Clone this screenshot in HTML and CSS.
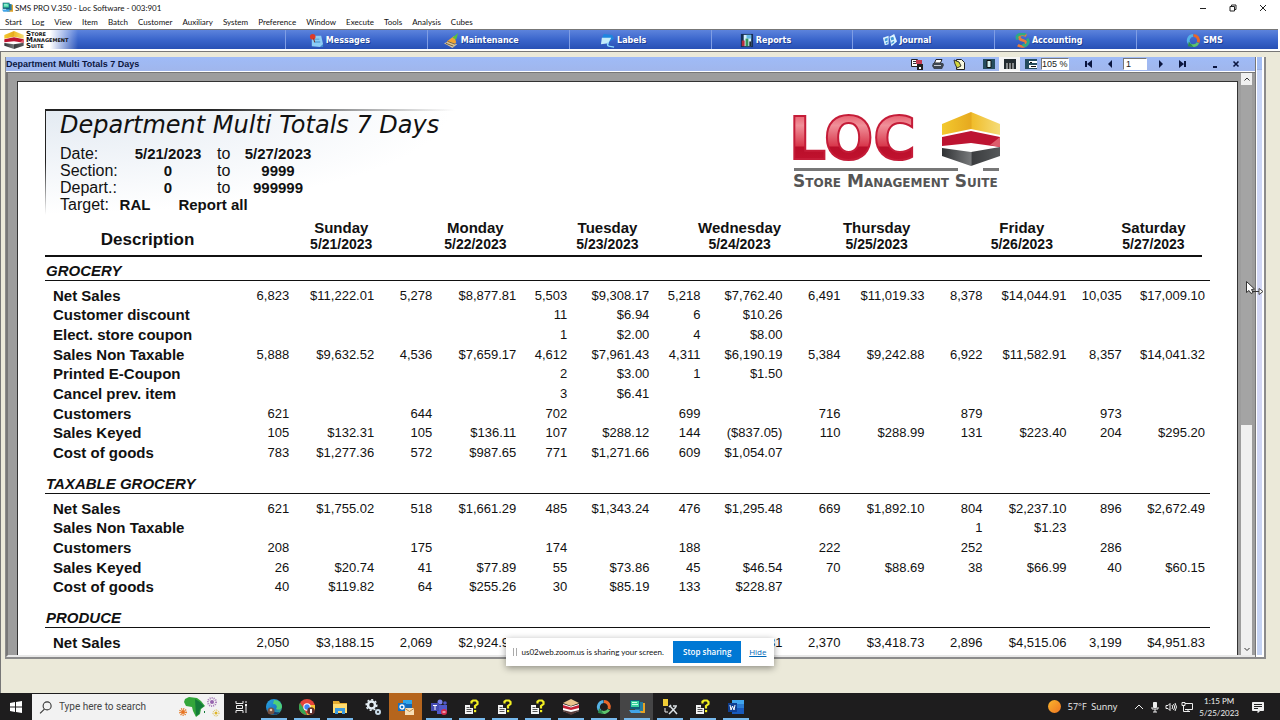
FILE: index.html
```html
<!DOCTYPE html>
<html lang="en">
<head>
<meta charset="utf-8">
<title>SMS PRO V.350 - Loc Software - 003:901</title>
<link rel="stylesheet" href="styles.css">
</head>
<body>
<svg class="defs" width="0" height="0" aria-hidden="true">
  <defs>
    <linearGradient id="red" x1="0" y1="0" x2="0" y2="1"><stop offset="0" stop-color="#e0364c"/><stop offset=".3" stop-color="#f09099"/><stop offset=".6" stop-color="#d8384c"/><stop offset=".62" stop-color="#b90f2a"/><stop offset="1" stop-color="#c81433"/></linearGradient>
    <linearGradient id="gold" x1="0" x2="1"><stop offset="0" stop-color="#f3c92e"/><stop offset=".5" stop-color="#e6a91f"/><stop offset=".52" stop-color="#f0bd2b"/><stop offset="1" stop-color="#f5dc78"/></linearGradient>
    <linearGradient id="steel" x1="0" x2="1"><stop offset="0" stop-color="#303234"/><stop offset=".5" stop-color="#77797b"/><stop offset=".52" stop-color="#3b3d3f"/><stop offset="1" stop-color="#55585a"/></linearGradient>
    <linearGradient id="edge" x1="0" y1="0" x2="1" y2="1"><stop offset="0" stop-color="#2aa7e0"/><stop offset=".6" stop-color="#1a79c9"/><stop offset="1" stop-color="#47c56c"/></linearGradient>
    <symbol id="cube" viewBox="0 0 58 54">
      <path fill="url(#gold)" d="M0 12 29 0 58 12V23L29 17 0 23z"/>
      <path fill="#bd1431" d="M0 25 29 19 58 25V35L29 31 0 34z"/>
      <path fill="#dd5d6c" d="M48 33l10-8v10z"/>
      <path fill="url(#steel)" d="M0 36 29 40 58 35V44L29 54 0 44z"/>
    </symbol>
    <symbol id="ask" viewBox="0 0 16 16">
      <path fill="#f4f4f4" d="M1 6h5v3h3v6H1z"/><path stroke="#555" d="M2.500 8.500h3M2.500 10.500h5M2.500 12.500h5"/>
      <path fill="none" stroke="#f2ef22" stroke-width="2.200" d="M7.500 4.500V2.500l1.500-1h3l1.500 1.500v2L11 7V9.500"/><path fill="#f2ef22" d="M10 11h2.200v2.200H10z"/>
    </symbol>
    <symbol id="ring" viewBox="0 0 16 16">
      <g fill="none" stroke-width="3"><path stroke="#e8672a" d="M8 2.500A5.500 5.500 0 0 1 13 10"/><path stroke="#5fc26d" d="M12.800 10.600A5.500 5.500 0 0 1 5 12.600"/><path stroke="#55b2e6" d="M4.500 12.300A5.500 5.500 0 0 1 7.500 2.500"/></g>
      <path fill="#2d8b4e" d="M3 9l5 6-6-1z"/>
    </symbol>
    <symbol id="screens" viewBox="0 0 16 16">
      <path fill="#e6a324" d="M9 4h7v10H7z"/><path fill="#247ba0" d="M6 3h8v9H6z"/><path fill="#125c79" d="M1 1h10v9H1z"/><path fill="#39cf9d" d="M2 2h8v6H2z"/><path stroke="#caffea" d="M3 3.500h5M3 5.500h6"/><path fill="#42a5e8" d="M0 11h10l2 3H2z"/>
    </symbol>
  </defs>
</svg>

<header class="titlebar">
  <svg class="app-icon"><use href="#screens"/></svg>
  <h1>SMS PRO V.350 - Loc Software - 003:901</h1>
  <div class="caption-buttons">
    <button aria-label="Minimize"><svg viewBox="0 0 8 8"><path d="M1 4.500h6"/></svg></button>
    <button aria-label="Restore"><svg viewBox="0 0 8 8"><path d="M1 2.500h4.500V7H1zM2.500 2.500V1H7v4.500H5.500"/></svg></button>
    <button aria-label="Close"><svg viewBox="0 0 8 8"><path d="M1 1l6 6M7 1L1 7"/></svg></button>
  </div>
</header>

<nav class="menubar">
  <button>Start</button><button>Log</button><button>View</button><button>Item</button><button>Batch</button><button>Customer</button><button>Auxiliary</button><button>System</button><button>Preference</button><button>Window</button><button>Execute</button><button>Tools</button><button>Analysis</button><button>Cubes</button>
</nav>

<nav class="modules">
  <div class="brand"><svg class="brand-cube"><use href="#cube"/></svg><span>Store<br>Management<br>Suite</span></div>
  <button><svg viewBox="0 0 16 16"><path fill="#8ccdf5" d="M3 3h10l2 9-3 3-9-1z"/><path fill="#3f8ed0" d="M6 6h5v1H6zM6 9h6v1H6zM12 15l3-3v3z"/><circle cx="4" cy="4" r="3" fill="#dc3b2b"/><path stroke="#721" d="M5 6l1 4"/></svg>Messages</button>
  <button><svg viewBox="0 0 16 16"><path fill="#f1a530" d="M3 9l8-6 2 7-6 4z"/><path fill="#56c33f" d="M9 5l6-5-2 7z"/><path fill="#d9c7a0" d="M0 11l5-2 9 3-5 4z"/><path fill="none" stroke="#755d35" d="M2 11l8 3M4 9l8 3"/></svg>Maintenance</button>
  <button><svg viewBox="0 0 16 16"><path fill="#1e86df" d="M4 1l9 1 2 4-5 3-8-3z"/><path fill="#c4ecfa" d="M2 5h10l-3 6-8 1z"/><path fill="none" stroke="#8edcff" stroke-width="1.500" d="M9 10c-3 5 2 4 6 5"/></svg>Labels</button>
  <button><svg viewBox="0 0 16 16"><path fill="#152f56" d="M2 1h13v14H2z"/><path fill="#d5effb" d="M5 2h8v12H5z"/><path fill="#65b9e6" d="M8 2h5v4H8z"/><path fill="#b62f3e" d="M3 8h3v6H3z"/><path fill="#38965a" d="M7 6h3v8H7z"/><path fill="#222d36" d="M11 9h2v5h-2z"/></svg>Reports</button>
  <button><svg viewBox="0 0 16 16"><path fill="#dff6ff" d="M1 5l6-2v9l-4 1zM8 4l5-3 3 8-6 5z"/><path fill="#4298d6" d="M3 6l3-1v3l-3 1zM9 5l3-1 1 3-3 1zM4 10l2-1v2l-2 1zM10 10l3-2v2l-3 2z"/></svg>Journal</button>
  <button><svg viewBox="0 0 16 16"><g fill="none" stroke-width="3"><path stroke="#eb7b38" d="M12 3C7 0 3 3 5 6s7 1 7 5-6 4-9 2"/><path stroke="#2daa86" d="M3 7c-4-6 6-7 8-5M8 12c4 4 8-2 5-6"/></g></svg>Accounting</button>
  <button><svg><use href="#ring"/></svg>SMS</button>
</nav>

<main class="client">
  <section class="child">
    <div class="doc">
      <div class="docbar">
        <h2>Department Multi Totals 7 Days</h2>
        <div class="tools">
          <button aria-label="Export"><svg viewBox="0 0 12 12"><path fill="#fff" stroke="#222" d="M.500 1.500h6v7h-6z"/><path stroke="#333" d="M2 3.500h3M2 5.500h3"/><path fill="#c43a50" d="M5 2h6v4H5z"/><path fill="#222" d="M6 6h6v6H6z"/><path fill="#fff" d="M8 9h2v2H8z"/></svg></button>
          <button aria-label="Print"><svg viewBox="0 0 12 12"><path fill="#fff" stroke="#222" d="M4 1.500h6L8.500 5H2.500z"/><path fill="#3d4652" d="M1 5h10l1 2-2 4H2L0 8z"/><path stroke="#c8ccd2" d="M2 7.500h7"/></svg></button>
          <button aria-label="Page setup"><svg viewBox="0 0 12 12"><path fill="#f7f7df" stroke="#222" d="M3.500 1.500h5l3 3v7h-8z"/><path fill="#d3d63d" stroke="#333" d="M1 2l5 2 2 4-4 2-2-4z"/></svg></button>
          <button class="set" aria-label="Whole page"><svg viewBox="0 0 12 12"><path fill="#254c5e" d="M0 1h12v10H0z"/><path fill="#d5f2ef" stroke="#111" d="M4 2.500h4v7H4z"/></svg></button>
          <button class="pressed" aria-label="Page width"><svg viewBox="0 0 12 12"><path fill="#222a30" d="M0 1h12v10H0z"/><path fill="#85898c" d="M2 5h8v6H2z"/><path stroke="#222" d="M4.500 5v6M7.500 5v6"/></svg></button>
          <button aria-label="Actual size"><svg viewBox="0 0 12 12"><path fill="#254c5e" d="M0 1h12v10H0z"/><path fill="#fff" d="M4 3h8v2H4zM4 7h8v3H4z"/><path stroke="#111" d="M6 8.500h5M5 4.500h2"/></svg></button>
          <input class="zoom" aria-label="Zoom" value="105 %">
          <button class="set" aria-label="First page"><svg viewBox="0 0 12 12"><path d="M2 3h2v6H2zM9 2v8L4 6z"/></svg></button>
          <button aria-label="Previous page"><svg viewBox="0 0 12 12"><path d="M8 2v8L4 6z"/></svg></button>
          <input class="pageno" aria-label="Page" value="1">
          <button aria-label="Next page"><svg viewBox="0 0 12 12"><path d="M4 2v8l4-4z"/></svg></button>
          <button aria-label="Last page"><svg viewBox="0 0 12 12"><path d="M3 2v8l5-4zM8 3h2v6H8z"/></svg></button>
          <button class="set2" aria-label="Minimize report"><svg viewBox="0 0 12 12"><path d="M4 8h4v2H4z"/></svg></button>
          <button aria-label="Close report"><svg viewBox="0 0 12 12"><path fill="none" stroke="#0b163f" stroke-width="1.600" d="M3.500 3.500l5 5M8.500 3.500l-5 5"/></svg></button>
        </div>
      </div>
      <div class="viewer">
        <article class="page">
          <header class="report-head">
            <div class="info">
              <h3>Department Multi Totals 7 Days</h3>
              <dl>
                <dt>Date:</dt><dd><b>5/21/2023</b><span>to</span><b>5/27/2023</b></dd>
                <dt>Section:</dt><dd><b>0</b><span>to</span><b>9999</b></dd>
                <dt>Depart.:</dt><dd><b>0</b><span>to</span><b>999999</b></dd>
                <dt>Target:</dt><dd class="target"><b>RAL</b><b>Report all</b></dd>
              </dl>
            </div>
            <svg class="loc" viewBox="0 0 208 78" role="img" aria-label="LOC Store Management Suite">
              <text class="loc-name" x="-4" y="47">LOC</text>
              <use href="#cube" x="149" y="0" width="58" height="54"/>
              <path fill="#777" d="M1 56h164v3H1zM190 56h16v3h-16z"/>
              <text class="loc-sub" x="0" y="75">Store Management Suite</text>
            </svg>
          </header>

          <table class="days">
            <colgroup><col class="d0"><col class="d1"><col class="d1"><col class="d2"><col class="d1"><col class="d4"><col class="d5"><col class="d6"></colgroup>
            <tr><th class="desc">Description</th><th>Sunday<small>5/21/2023</small></th><th>Monday<small>5/22/2023</small></th><th>Tuesday<small>5/23/2023</small></th><th>Wednesday<small>5/24/2023</small></th><th>Thursday<small>5/25/2023</small></th><th>Friday<small>5/26/2023</small></th><th>Saturday<small>5/27/2023</small></th></tr>
          </table>

          <table class="figures">
            <colgroup><col class="c-desc"><col class="c-first"><col class="c85"><col class="c58"><col class="c84"><col class="c51"><col class="c82"><col class="c51"><col class="c82"><col class="c58"><col class="c84"><col class="c58"><col class="c84"><col class="c55"><col class="c-last"></colgroup>
            <tbody>
              <tr class="dept"><th colspan="15">GROCERY</th></tr>
              <tr><th>Net Sales</th><td>6,823</td><td>$11,222.01</td><td>5,278</td><td>$8,877.81</td><td>5,503</td><td>$9,308.17</td><td>5,218</td><td>$7,762.40</td><td>6,491</td><td>$11,019.33</td><td>8,378</td><td>$14,044.91</td><td>10,035</td><td>$17,009.10</td></tr>
              <tr><th>Customer discount</th><td></td><td></td><td></td><td></td><td>11</td><td>$6.94</td><td>6</td><td>$10.26</td><td></td><td></td><td></td><td></td><td></td><td></td></tr>
              <tr><th>Elect. store coupon</th><td></td><td></td><td></td><td></td><td>1</td><td>$2.00</td><td>4</td><td>$8.00</td><td></td><td></td><td></td><td></td><td></td><td></td></tr>
              <tr><th>Sales Non Taxable</th><td>5,888</td><td>$9,632.52</td><td>4,536</td><td>$7,659.17</td><td>4,612</td><td>$7,961.43</td><td>4,311</td><td>$6,190.19</td><td>5,384</td><td>$9,242.88</td><td>6,922</td><td>$11,582.91</td><td>8,357</td><td>$14,041.32</td></tr>
              <tr><th>Printed E-Coupon</th><td></td><td></td><td></td><td></td><td>2</td><td>$3.00</td><td>1</td><td>$1.50</td><td></td><td></td><td></td><td></td><td></td><td></td></tr>
              <tr><th>Cancel prev. item</th><td></td><td></td><td></td><td></td><td>3</td><td>$6.41</td><td></td><td></td><td></td><td></td><td></td><td></td><td></td><td></td></tr>
              <tr><th>Customers</th><td>621</td><td></td><td>644</td><td></td><td>702</td><td></td><td>699</td><td></td><td>716</td><td></td><td>879</td><td></td><td>973</td><td></td></tr>
              <tr><th>Sales Keyed</th><td>105</td><td>$132.31</td><td>105</td><td>$136.11</td><td>107</td><td>$288.12</td><td>144</td><td>($837.05)</td><td>110</td><td>$288.99</td><td>131</td><td>$223.40</td><td>204</td><td>$295.20</td></tr>
              <tr><th>Cost of goods</th><td>783</td><td>$1,277.36</td><td>572</td><td>$987.65</td><td>771</td><td>$1,271.66</td><td>609</td><td>$1,054.07</td><td></td><td></td><td></td><td></td><td></td><td></td></tr>
            </tbody>
            <tbody>
              <tr class="dept"><th colspan="15">TAXABLE GROCERY</th></tr>
              <tr><th>Net Sales</th><td>621</td><td>$1,755.02</td><td>518</td><td>$1,661.29</td><td>485</td><td>$1,343.24</td><td>476</td><td>$1,295.48</td><td>669</td><td>$1,892.10</td><td>804</td><td>$2,237.10</td><td>896</td><td>$2,672.49</td></tr>
              <tr><th>Sales Non Taxable</th><td></td><td></td><td></td><td></td><td></td><td></td><td></td><td></td><td></td><td></td><td>1</td><td>$1.23</td><td></td><td></td></tr>
              <tr><th>Customers</th><td>208</td><td></td><td>175</td><td></td><td>174</td><td></td><td>188</td><td></td><td>222</td><td></td><td>252</td><td></td><td>286</td><td></td></tr>
              <tr><th>Sales Keyed</th><td>26</td><td>$20.74</td><td>41</td><td>$77.89</td><td>55</td><td>$73.86</td><td>45</td><td>$46.54</td><td>70</td><td>$88.69</td><td>38</td><td>$66.99</td><td>40</td><td>$60.15</td></tr>
              <tr><th>Cost of goods</th><td>40</td><td>$119.82</td><td>64</td><td>$255.26</td><td>30</td><td>$85.19</td><td>133</td><td>$228.87</td><td></td><td></td><td></td><td></td><td></td><td></td></tr>
            </tbody>
            <tbody>
              <tr class="dept"><th colspan="15">PRODUCE</th></tr>
              <tr><th>Net Sales</th><td>2,050</td><td>$3,188.15</td><td>2,069</td><td>$2,924.90</td><td></td><td></td><td></td><td>$2,951.31</td><td>2,370</td><td>$3,418.73</td><td>2,896</td><td>$4,515.06</td><td>3,199</td><td>$4,951.83</td></tr>
            </tbody>
          </table>
        </article>
        <div class="scroll">
          <button aria-label="Scroll up"><svg viewBox="0 0 8 8"><path d="M1.500 5.500L4 3l2.500 2.500"/></svg></button>
          <div class="track"><div class="thumb"></div></div>
          <button aria-label="Scroll down"><svg viewBox="0 0 8 8"><path d="M1.500 3L4 5.500 6.500 3"/></svg></button>
        </div>
      </div>
    </div>
    <div class="side"></div>
  </section>

  <svg class="cursor" viewBox="0 0 18 16"><path fill="none" stroke="#333" d="M5 10.500h8"/><path fill="#fff" stroke="#444" d="M13 7.500l4 3-4 3z"/><path fill="#fff" stroke="#333" d="M.500.500v11l2.500-2 2 3 2-1-1.500-3 3-.500z"/></svg>

  <aside class="share">
    <span class="grip"></span>
    <p>us02web.zoom.us is sharing your screen.</p>
    <button>Stop sharing</button>
    <a href="#">Hide</a>
  </aside>
</main>

<footer class="taskbar">
  <button class="start" aria-label="Start"><svg viewBox="0 0 12 12"><path fill="#fff" d="M0 2l5-1v4.500H0zM6 1l6-1v5.500H6zM0 6.500h5V11l-5-1zM6 6.500h6V12l-6-1z"/></svg></button>
  <label class="search">
    <svg class="lens" viewBox="0 0 12 12"><circle cx="7.500" cy="4.500" r="3.700"/><path d="M5 7.500L1 11.500"/></svg>
    <input placeholder="Type here to search" aria-label="Search">
    <svg class="art" viewBox="0 0 42 22"><path fill="#33a63a" d="M7 3l4-2 8 1 4 3 4 5-4 3-1 5-4 3-3-6-1-4-6-1-2-4z"/><path fill="#147b39" d="M17 3l5 3 4 4-4 3-1 5-3 2z"/><g fill="none" stroke-dasharray="1 1"><circle cx="5" cy="16" r="3" stroke="#e57b28" stroke-width="2"/><circle cx="34" cy="6" r="4" stroke="#a77bb8" stroke-width="2"/><circle cx="38" cy="17" r="3" stroke="#d9b32d"/></g><circle cx="5" cy="16" r="2" fill="#e87320"/><circle cx="34" cy="6" r="2" fill="#9764ae"/><circle cx="38" cy="17" r="1.500" fill="#dfb525"/><path fill="#147b39" d="M26 15h1v2h-1z"/></svg>
  </label>
  <div class="apps">
    <button aria-label="Task view"><svg viewBox="0 0 16 16"><path fill="none" stroke="#eee" d="M3 2v2.500h7V2M3 14v-2.500h7V14M3.500 6.500h6v3h-6zM13 2v2M13 7v7"/><path fill="#eee" d="M12 5h2v2h-2z"/></svg></button>
    <button class="open" aria-label="Edge"><svg viewBox="0 0 16 16"><circle cx="8" cy="8" r="8" fill="url(#edge)"/><path fill="#4fcf79" d="M8 1c5 0 8 3 8 7-1 3-4 3-6 2 2-3 0-5-3-5z"/><path fill="#153b73" d="M6 8c-1 4 3 6 8 5-3 4-8 3-10 0z"/><circle cx="5" cy="12" r="3.500" fill="#765142"/><circle cx="5" cy="11" r="1.300" fill="#edc8aa"/></svg></button>
    <button class="open" aria-label="Chrome"><svg viewBox="0 0 16 16"><circle cx="8" cy="8" r="8" fill="#e6453a"/><path fill="#36a852" d="M1 4l4 6 3 6C1 15-2 9 1 4z"/><path fill="#f7c535" d="M11 6h5c1 6-3 10-8 10z"/><circle cx="8" cy="8" r="3.700" fill="#fff"/><circle cx="8" cy="8" r="2.700" fill="#4285f4"/><circle cx="12" cy="12" r="3.800" fill="#61302d"/><path fill="#fff" d="M11 10h2v4h-2z"/></svg></button>
    <button class="open" aria-label="File Explorer"><svg viewBox="0 0 16 16"><path fill="#e5ac31" d="M1 2h6l1 2h7v10H1z"/><path fill="#ffdc70" d="M1 5h14v9H1z"/><path fill="#3d9be0" d="M3 9h10v6h-3v-3H6v3H3z"/></svg></button>
    <button aria-label="Services"><svg viewBox="0 0 16 16"><circle cx="6.500" cy="6" r="3.500" fill="none" stroke="#e5eef4" stroke-width="2.500"/><circle cx="6.500" cy="6" r="5.300" fill="none" stroke="#e5eef4" stroke-width="1.500" stroke-dasharray="2 2"/><circle cx="13" cy="13" r="2" fill="none" stroke="#c9dbe8" stroke-width="2"/></svg></button>
    <button class="alert" aria-label="Outlook"><svg viewBox="0 0 16 16"><path fill="#30a6ea" d="M5 1h9v9H5z"/><path fill="#1769b5" d="M5 5h9v7H5z"/><path fill="#1473c8" d="M0 4h8v8H0z"/><circle cx="4" cy="8" r="2" fill="none" stroke="#fff" stroke-width="1.300"/><path fill="#f8dfb5" d="M7 9h9v7H7z"/><path fill="none" stroke="#c58b41" d="M7 9.500l4.500 3 4.500-3"/></svg></button>
    <button class="open" aria-label="Teams"><svg viewBox="0 0 16 16"><circle cx="9" cy="3" r="2.500" fill="#7b83eb"/><circle cx="14" cy="4" r="1.800" fill="#5059c9"/><path fill="#5059c9" d="M6 6h10v6l-4 3H6z"/><path fill="#444bb0" d="M0 4h8v8H0z"/><path stroke="#fff" d="M2 6.500h4M4 6v5"/><circle cx="13" cy="13" r="3" fill="#d52c4d"/><path stroke="#fff" d="M11.500 13h3"/></svg></button>
    <button class="open" aria-label="Help 1"><svg><use href="#ask"/></svg></button>
    <button class="open" aria-label="Help 2"><svg><use href="#ask"/></svg></button>
    <button class="open" aria-label="Help 3"><svg><use href="#ask"/></svg></button>
    <button class="open" aria-label="LOC"><svg viewBox="0 0 16 16"><path fill="#e9c58d" d="M0 4l8-4 8 4-8 3z"/><path fill="#fff" d="M0 5l8 2.500L16 5v7l-8 3-8-3z"/><path fill="#c32035" d="M0 6l8 2.500L16 6v3l-8 2-8-2z"/><path fill="#5a3d3b" d="M0 11l8 2 8-2v1l-8 4-8-4z"/></svg></button>
    <button class="open" aria-label="SMS"><svg><use href="#ring"/></svg></button>
    <button class="open active" aria-label="SMS PRO"><svg><use href="#screens"/></svg></button>
    <button class="open" aria-label="Database tools"><svg viewBox="0 0 16 16"><path fill="#f0cd36" d="M1 0h5v7H1z"/><path stroke="#eee" d="M3 9v4h3" fill="none"/><path stroke="#dce1e5" stroke-width="1.500" d="M8 7l7 8M14 8l-7 7M11 7h4M7 8l2-2"/></svg></button>
    <button class="open" aria-label="Help 4"><svg><use href="#ask"/></svg></button>
    <button class="open" aria-label="Word"><svg viewBox="0 0 16 16"><path fill="#41a5ee" d="M4 1h12v4H4z"/><path fill="#2b7cd3" d="M4 5h12v4H4z"/><path fill="#185abd" d="M4 9h12v6H4z"/><path fill="#103f91" d="M0 4h9v9H0z"/><path fill="none" stroke="#fff" d="M2 6l1 5 1.500-4L6 11l1-5"/></svg></button>
  </div>
  <div class="tray">
    <span class="sun"></span><span class="weather">57°F&nbsp; Sunny</span>
    <svg viewBox="0 0 12 12"><path d="M2 8l4-4 4 4"/></svg>
    <svg viewBox="0 0 12 12"><path fill="#eee" d="M4.500 1.500h3v5h-3z"/><path d="M3 6v2h6V6M6 8v3M4 11h4"/></svg>
    <svg viewBox="0 0 12 12"><path d="M1 4.500h2l2-2v7l-2-2H1zM7 4q1.500 2 0 4M8.500 3q2.500 3 0 6M10 2q3 4 0 8"/></svg>
    <svg viewBox="0 0 12 12"><path d="M4 2.500h7.500v6H4M1 1.500h3v3H1zM2.500 5v5.500H9M7 8.500v2"/></svg>
    <time>1:15 PM<br>5/25/2023</time>
    <svg class="note" viewBox="0 0 12 12"><path fill="#eee" d="M.500 1.500h11v8H8L6 11.500v-2H.500z"/><path stroke="#222" d="M2 3.500h8M2 5.500h8M2 7.500h4"/></svg>
  </div>
</footer>
</body>
</html>
```
FILE: styles.css
```css
* { box-sizing: border-box; }
body {
  margin: 0;
  height: 100vh;
  display: flex;
  flex-direction: column;
  overflow: hidden;
  background: #fff;
  color: #111;
  font-family: "Liberation Sans", Arial, sans-serif;
}
button {
  display: flex;
  align-items: center;
  justify-content: center;
  padding: 0;
  border: 0;
  background: none;
  color: inherit;
  font: inherit;
}
h1, h2, h3, p, dl, dd { margin: 0; }
.defs { position: absolute; }

/* Window caption and menu */
.titlebar {
  display: flex;
  align-items: center;
  height: 15px;
  flex: none;
  padding-left: 2px;
}
.app-icon { width: 11px; height: 11px; margin-right: 2px; }
.titlebar h1 { flex: 1; font: 8px/14px Lato, sans-serif; }
.caption-buttons { display: flex; padding-right: 2px; }
.caption-buttons button { width: 30px; height: 14px; }
.caption-buttons svg { width: 8px; height: 8px; fill: none; stroke: #222; }
.menubar {
  display: flex;
  gap: 10px;
  height: 14px;
  flex: none;
  padding-left: 5px;
  font: 8px/14px Lato, sans-serif;
}

/* Module bar */
.modules {
  display: grid;
  grid-template-columns: 285px repeat(7, 1fr);
  flex: none;
  height: 20px;
  margin-right: 2px;
  border-top: 1px solid #777;
  background: linear-gradient(#5c83dc, #3b66cc 50%, #2850b4);
}
.brand {
  display: flex;
  align-items: center;
  gap: 2px;
  padding-left: 4px;
  background: linear-gradient(90deg, #fff 50px, rgba(255, 255, 255, 0) 78px);
}
.brand-cube { width: 20px; height: 18px; }
.brand span { font: small-caps bold 7px/6px "DejaVu Sans", sans-serif; }
.modules button {
  gap: 2px;
  padding: 2px 34px 0 0;
  border-left: 1px solid #7f9de4;
  color: #fff;
  font: bold 8px/16px "DejaVu Sans", sans-serif;
  text-shadow: 1px 1px #1d3f94;
}
.modules button:last-child { padding-right: 6px; }
.modules button svg { width: 15px; height: 15px; }

/* Client area and report window */
.client {
  position: relative;
  flex: 1;
  min-height: 0;
  display: flex;
  margin-top: 2px;
  padding: 5px 14px 34px 4px;
  border: solid #777;
  border-width: 1px 0 0 1px;
  background: #ebe9d9;
}
.child {
  flex: 1;
  min-width: 0;
  display: flex;
  border: solid #8b8b8b;
  border-width: 0 2px 2px 1px;
}
.side {
  width: 8px;
  border: solid #fff;
  border-width: 0 2px 2px 1px;
  background: linear-gradient(#a3bdf3 12px, #6f8fd0 12px, #c8d6f7 13px, #d5d7f4 50%, #c4d3f3);
}
.doc {
  flex: 1;
  min-width: 0;
  display: flex;
  flex-direction: column;
  border-right: 1px solid #777;
}
.docbar {
  display: flex;
  align-items: center;
  height: 15px;
  flex: none;
  border-bottom: 1px solid #fff;
  background: linear-gradient(#9fbbf7, #a0b6ec);
}
.docbar h2 { flex: 1; color: #0b163f; font: bold 9px/14px "Liberation Sans", Arial, sans-serif; }
.tools { display: flex; align-items: center; padding-right: 9px; }
.tools button { width: 21px; height: 14px; }
.tools svg { width: 12px; height: 12px; fill: #0b163f; }
.tools .set { margin-left: 9px; }
.tools .set2 { margin-left: 12px; }
.tools .pressed { background: #f4f4f4; }
.tools input {
  height: 12px;
  padding: 0 2px;
  border: 1px solid #777;
  border-right-color: #fff;
  border-bottom-color: #fff;
  border-radius: 0;
  background: #fff;
  color: #222;
  font: 9px/10px "Liberation Sans", Arial, sans-serif;
}
.tools .zoom { width: 28px; padding: 0; }
.tools .pageno { width: 24px; margin: 0 3px; }
.viewer {
  flex: 1;
  min-height: 0;
  display: flex;
  padding-left: 9px;
  border: solid #777;
  border-width: 1px 0 0 2px;
  background: #9d9d9d;
  border-bottom: 2px solid #e8e8e8;
}
.page {
  flex: 1;
  min-width: 0;
  margin-top: 8px;
  padding: 27px 27px 0;
  overflow: hidden;
  border: solid #333;
  border-width: 1px 1px 0;
  background: #fff;
}
.scroll { width: 17px; flex: none; display: flex; flex-direction: column; padding: 0 3px; }
.scroll button { height: 12px; flex: none; background: #f0f0f0; }
.scroll svg { width: 8px; height: 8px; fill: none; stroke: #333; }
.track { flex: 1; background: #f0f0f0; }
.thumb { height: 61%; background: #a4a4a4; }

/* Report heading */
.report-head { display: flex; height: 109px; }
.info {
  width: 410px;
  flex: none;
  height: 106px;
  padding-left: 15px;
  background:
    linear-gradient(90deg, #222 40%, transparent) top / 100% 2px no-repeat,
    linear-gradient(#222 50%, transparent) left / 1px 100% no-repeat,
    radial-gradient(ellipse at 0 0, #e3eaf2, rgba(255, 255, 255, 0) 70%);
}
.info h3 { white-space: nowrap; font: italic 24px/33px "DejaVu Sans", sans-serif; }
.info dl {
  display: grid;
  grid-template-columns: 59px 1fr;
  padding-top: 3px;
  font-size: 16px;
  line-height: 17px;
}
.info dd { display: grid; grid-template-columns: 98px 12px 98px; text-align: center; }
.info b { font-size: 15px; }
.info .target { grid-template-columns: 32px 72px; column-gap: 26px; white-space: nowrap; }
.loc { width: 208px; height: 78px; margin: 3px 0 0 338px; overflow: visible; }
.loc-name { fill: url(#red); stroke: #c51c38; stroke-width: 2px; font: bold 58px "DejaVu Sans", sans-serif; }
.loc-sub { fill: #555; font: small-caps bold 17px "DejaVu Sans", sans-serif; }

/* Report tables */
table { width: 100%; table-layout: fixed; border-spacing: 0; }
th, td { padding: 0; white-space: nowrap; }
.days {
  background: linear-gradient(#111, #111) left bottom / calc(100% - 8px) 2px no-repeat;
  font-size: 15px;
  line-height: 17px;
}
.days th { height: 39px; padding-bottom: 4px; }
.days small { display: block; font-size: 14px; line-height: 16px; }
.days .desc { padding: 3px 24px 0 0; font-size: 17px; }
.d0 { width: 229px; }
.d1 { width: 134px; }
.d2 { width: 130px; }
.d4 { width: 140px; }
.d5 { width: 150px; }
.d6 { width: 113px; }
.figures { font-size: 13px; line-height: 19px; text-align: right; }
.figures tr { height: 20px; }
.figures tr:nth-child(3n) { height: 19px; }
.figures th { padding-left: 8px; font-size: 15px; text-align: left; }
.figures .dept { height: 24px; }
.figures tbody + tbody .dept { height: 32px; }
.figures .dept th {
  padding-left: 1px;
  border-bottom: 1px solid #111;
  font-style: italic;
  line-height: 18px;
  vertical-align: bottom;
}
.dept + tr th, .dept + tr td { padding-top: 5px; }
.figures td:last-child { padding-right: 5px; }
.c-desc { width: 160px; }
.c-first { width: 84px; }
.c85 { width: 85px; }
.c84 { width: 84px; }
.c82 { width: 82px; }
.c58 { width: 58px; }
.c55 { width: 55px; }
.c51 { width: 51px; }
.c-last { width: 88px; }

/* Overlays */
.cursor { position: absolute; top: 229px; left: 1245px; width: 18px; height: 16px; }
.share {
  position: absolute;
  bottom: 27px;
  left: 50%;
  width: 268px;
  height: 28px;
  margin-left: -135px;
  display: flex;
  align-items: center;
  padding: 0 7px;
  background: #fff;
  box-shadow: 0 2px 7px rgba(0, 0, 0, .4);
  font: 8px/12px "Open Sans", sans-serif;
  white-space: nowrap;
}
.share .grip { width: 4px; height: 8px; border: solid #aaa; border-width: 0 1px; }
.share p { flex: 1; min-width: 0; padding-left: 5px; font-family: Lato, sans-serif; }
.share button { width: 68px; height: 22px; flex: none; background: #0078d4; color: #fff; font-weight: 600; }
.share a { margin-left: 8px; color: #0068b8; }

/* Taskbar */
.taskbar {
  display: flex;
  flex: none;
  height: 27px;
  background: #1e1d1e;
  color: #eee;
  font: 9px/13px "Open Sans", sans-serif;
}
.start { width: 32px; }
.start svg { width: 12px; height: 12px; }
.search { display: flex; align-items: center; width: 192px; margin-top: 1px; padding: 0 4px 0 7px; background: #f2f2f2; }
.lens { width: 13px; height: 13px; flex: none; fill: none; stroke: #333; }
.search input { flex: 1; min-width: 0; padding: 0 0 0 7px; border: 0; background: none; font: 10px/14px Roboto, sans-serif; }
.search input::placeholder { color: #444; opacity: 1; }
.art { width: 42px; height: 22px; flex: none; }
.apps { display: flex; flex: 1; }
.apps button { width: 33px; }
.apps svg { width: 16px; height: 16px; }
.apps .open { background: linear-gradient(#76b9ed, #76b9ed) bottom / 26px 2px no-repeat; }
.apps .active { background-color: #454546; }
.apps .alert { background: #b5651d; }
.tray { display: flex; align-items: center; gap: 4px; padding-right: 16px; }
.tray svg { width: 12px; height: 12px; fill: none; stroke: #eee; }
.sun { width: 13px; height: 13px; border-radius: 50%; background: linear-gradient(135deg, #f9b52d, #ef7622); }
.weather { padding: 0 12px 0 3px; }
.tray time { padding: 0 9px 0 2px; font: 8px/12px Lato, sans-serif; text-align: center; }
```
